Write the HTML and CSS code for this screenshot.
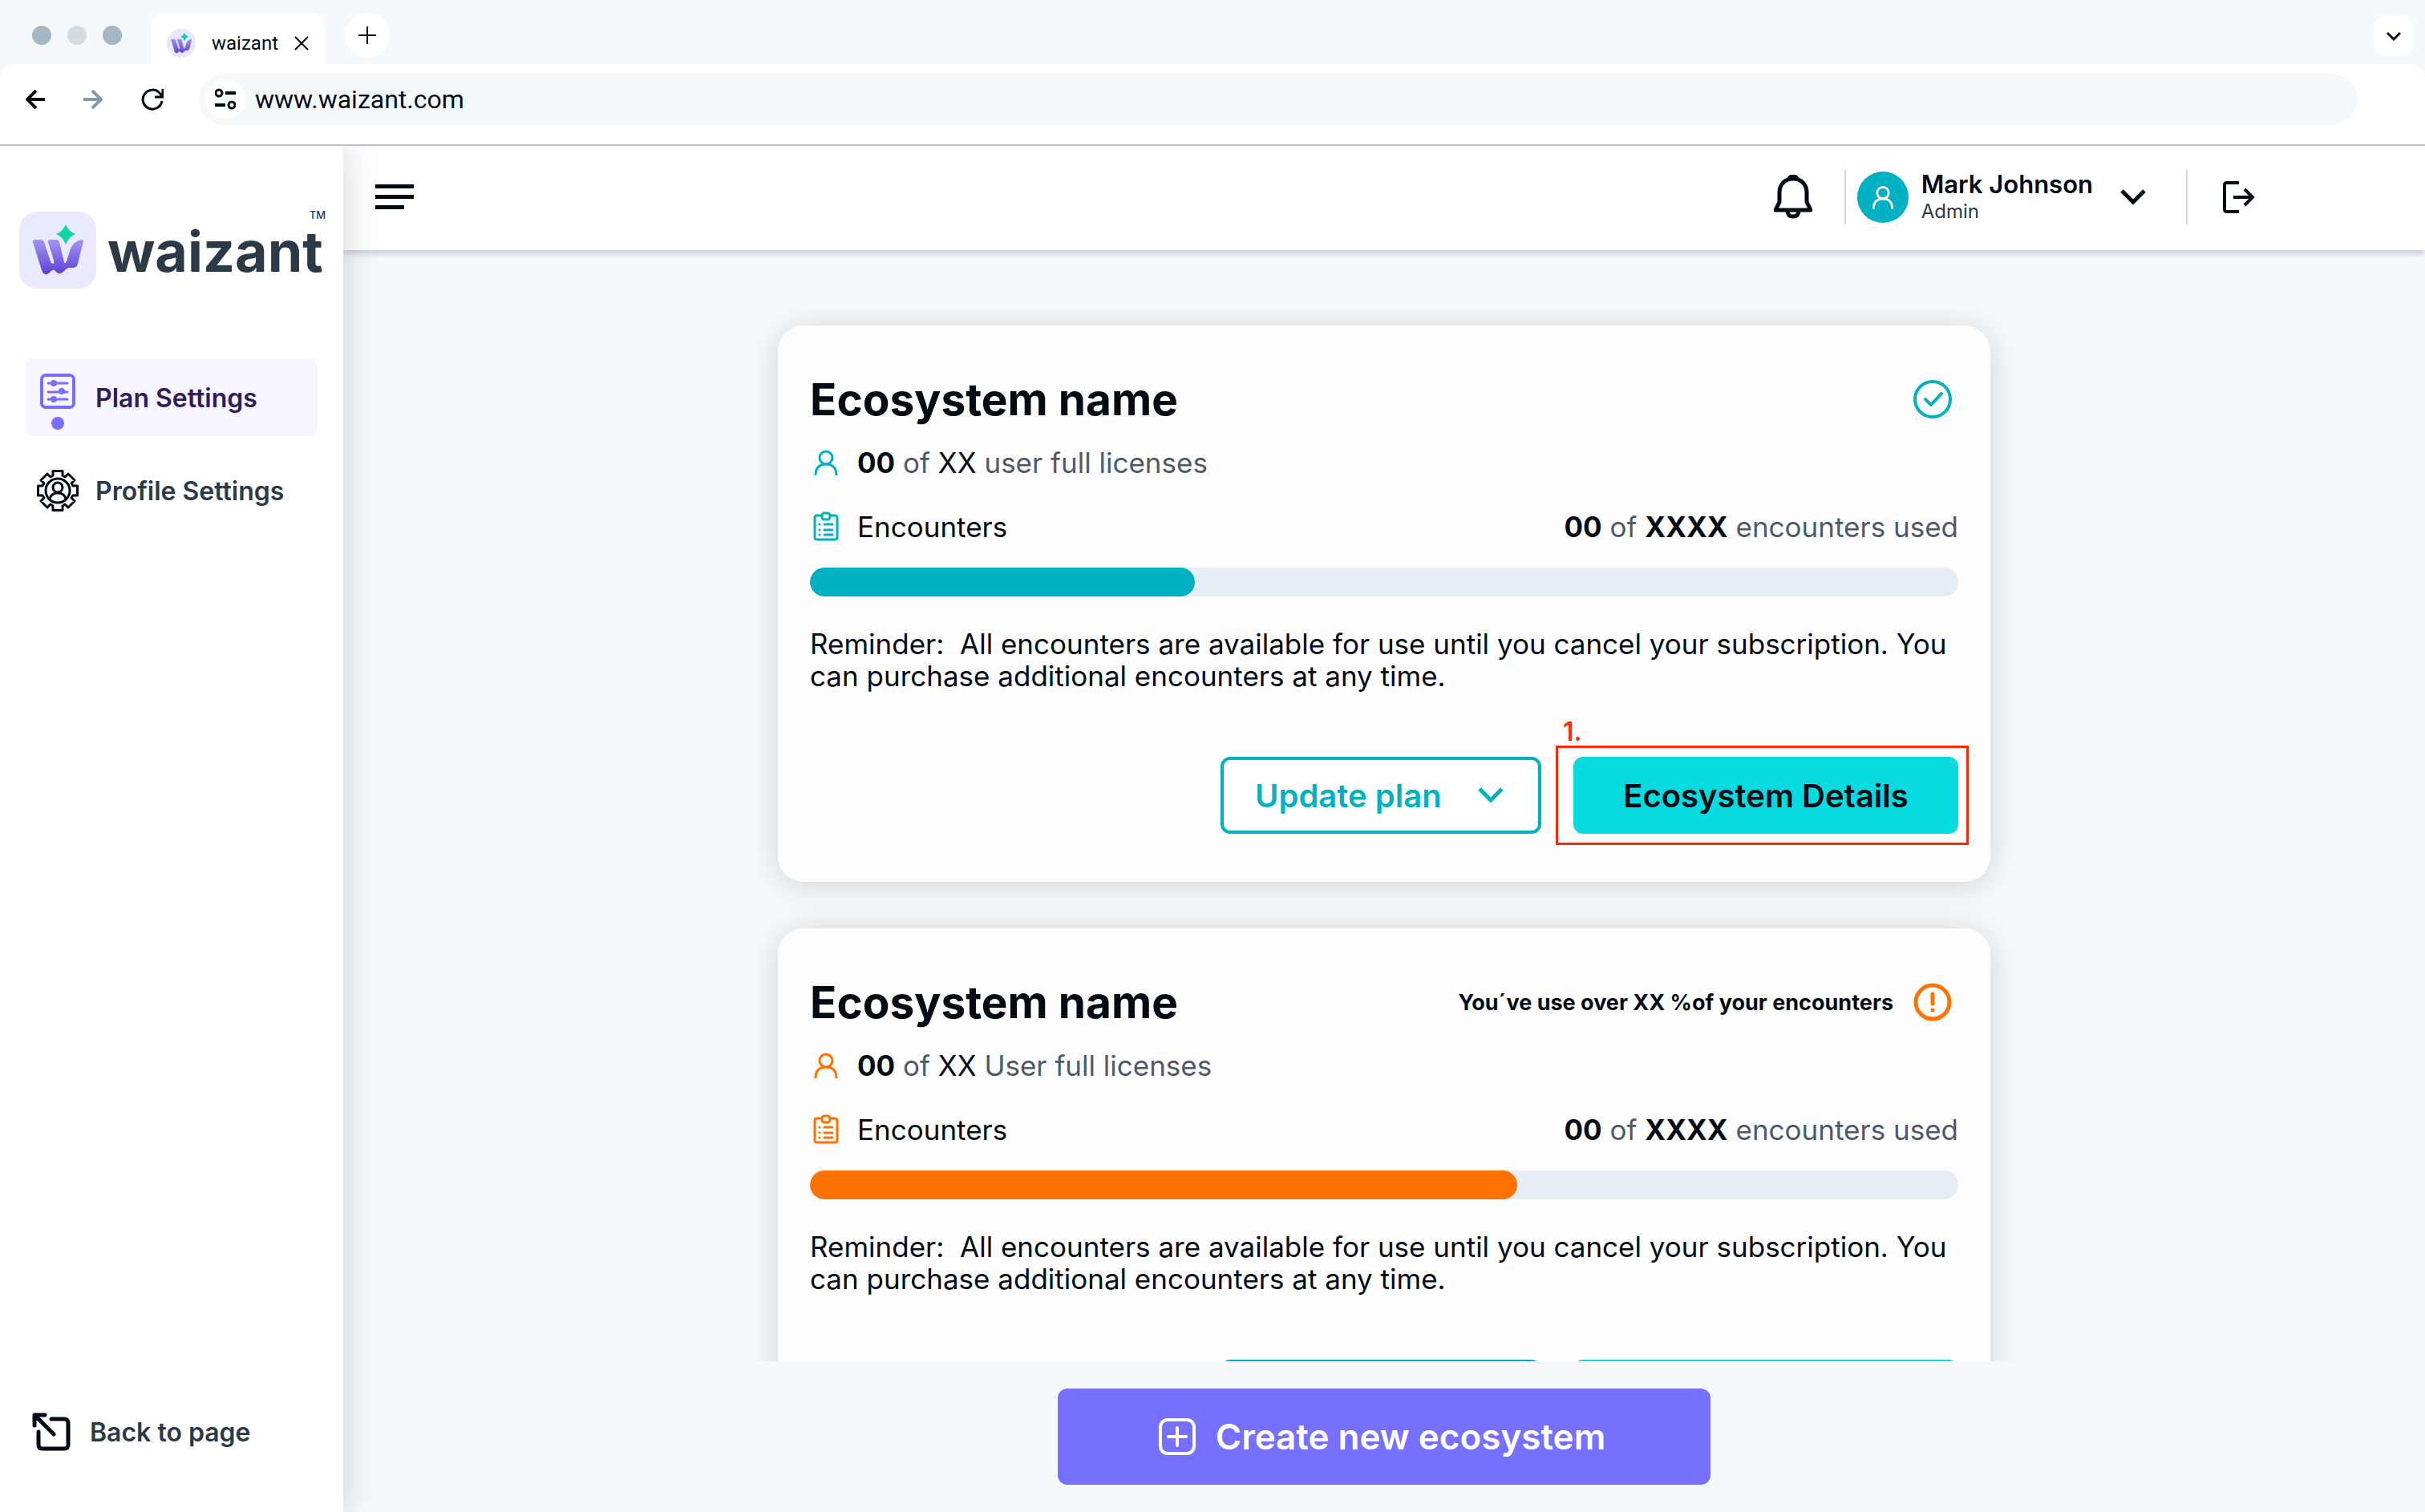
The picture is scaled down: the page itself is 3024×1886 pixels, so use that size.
FILE: index.html
```html
<!DOCTYPE html>
<html lang="en">
<head>
<meta charset="utf-8">
<meta name="viewport" content="width=device-width, initial-scale=1">
<title>waizant</title>
<link rel="stylesheet" href="styles.css">
</head>
<body>
<svg class="defs" width="0" height="0" aria-hidden="true">
  <defs>
    <linearGradient id="w-fill" x1="0" y1="0" x2="0" y2="1">
      <stop offset="0" stop-color="#a394f6"/>
      <stop offset="1" stop-color="#6040d4"/>
    </linearGradient>
    <symbol id="mark" viewBox="0 0 96 96">
      <path fill="url(#w-fill)" d="M19 35H27Q30 35 31 38L39 62Q40 65 42 65Q44 65 43 61L36 38Q35 35 38 35H46Q49 35 50 38L56 63Q57 66 59 62L63 49Q67 36 79 35Q80 35 80 37L73 65Q72 70 66 70H61Q58 72 55 75Q51 79 47 76L44 73Q42 72 40 74Q36 79 32 78Q29 77 28 73L17 38Q16 35 19 35Z"/>
      <path fill="#12d6ab" d="M58 16Q62 25 70 28Q62 31 58 41Q54 31 46 28Q54 25 58 16Z"/>
    </symbol>
    <symbol id="user" viewBox="0 0 40 40">
      <g fill="none" stroke="currentColor" stroke-width="3"><circle cx="20" cy="14" r="8"/><path d="M7 36C7 26 12 22 20 22S33 26 33 36"/></g>
    </symbol>
    <symbol id="clipboard" viewBox="0 0 40 40">
      <g fill="none" stroke="currentColor" stroke-width="3" stroke-linecap="round"><path d="M15 6H9Q6 6 6 9V33Q6 36 9 36H31Q34 36 34 33V9Q34 6 31 6H25"/><rect x="15" y="3" width="10" height="8" rx="3"/><path d="M12 17H12M18 17H28M12 24H12M18 24H28M12 30H12M18 30H28"/></g>
    </symbol>
    <symbol id="chevron" viewBox="0 0 32 20">
      <path d="M2 2L16 16L30 2" fill="none" stroke="currentColor" stroke-width="5"/>
    </symbol>
  </defs>
</svg>

<header class="browser">
  <div class="tabs">
    <div class="lights"><span></span><span></span><span></span></div>
    <div class="tab">
      <svg class="favicon" viewBox="4 4 88 88" aria-hidden="true"><use href="#mark" width="96" height="96"/></svg>
      <span>waizant</span>
      <button class="bare" aria-label="Close tab"><svg width="18" height="18" viewBox="0 0 18 18"><path d="M1 1L17 17M17 1L1 17" stroke="currentColor" stroke-width="2"/></svg></button>
    </div>
    <button class="new-tab" aria-label="New tab"><svg width="22" height="22" viewBox="0 0 22 22"><path d="M11 0V22M0 11H22" stroke="currentColor" stroke-width="2"/></svg></button>
    <button class="tab-list" aria-label="Search tabs"><svg width="18" height="12" viewBox="0 0 18 12"><path d="M1 2L9 10L17 2" fill="none" stroke="currentColor" stroke-width="3"/></svg></button>
  </div>
  <div class="toolbar">
    <button class="bare" aria-label="Back"><svg width="24" height="24" viewBox="0 0 24 24"><path d="M24 12H3M13 1L2 12L13 23" fill="none" stroke="currentColor" stroke-width="4"/></svg></button>
    <button class="bare faded" aria-label="Forward"><svg width="24" height="24" viewBox="0 0 24 24"><path d="M0 12H21M11 1L22 12L11 23" fill="none" stroke="currentColor" stroke-width="4"/></svg></button>
    <button class="bare" aria-label="Reload"><svg width="28" height="28" viewBox="0 0 28 28"><path d="M26 16A12 12 0 1 1 23 6L27 11M27 1V11H17" fill="none" stroke="currentColor" stroke-width="3"/></svg></button>
    <div class="address">
      <button class="site-info" aria-label="Site information"><svg width="26" height="30" viewBox="0 -2 26 30" fill="none" stroke="currentColor"><circle cx="5" cy="5" r="4" stroke-width="3"/><path d="M13 5H26M0 20H13" stroke-width="4"/><circle cx="21" cy="20" r="4" stroke-width="3"/></svg></button>
      <input type="text" aria-label="Address" value="www.waizant.com">
    </div>
  </div>
</header>

<div class="app">
  <aside class="sidebar">
    <div class="logo">
      <svg class="logo-mark" viewBox="0 0 96 96" aria-hidden="true"><use href="#mark"/></svg>
      <span class="logo-word">waizant</span>
      <span class="logo-tm">TM</span>
    </div>
    <nav>
      <a class="item current" href="#plan">
        <svg width="52" height="96" viewBox="0 0 52 96" fill="none" stroke="currentColor" stroke-width="4"><rect x="6" y="20" width="40" height="40" rx="5"/><path stroke-width="3" stroke-linecap="round" d="M14 30H38M14 41H38M14 50H38"/><g fill="currentColor" stroke="none"><circle cx="21" cy="30" r="4"/><circle cx="31" cy="40" r="4"/><circle cx="21" cy="50" r="4"/><circle cx="26" cy="80" r="8"/></g></svg>
        Plan Settings
      </a>
      <a class="item" href="#profile">
        <svg width="52" height="52" viewBox="-26 -26 52 52" fill="none" stroke="#020b13" stroke-width="3" stroke-linejoin="round"><path d="M-6-24.5H6V-19L9-17L13-21L21-13L17-9L19-6H24.5V6H19L17 9L21 13L13 21L9 17L6 19V24.5H-6V19L-9 17L-13 21L-21 13L-17 9L-19 6H-24.5V-6H-19L-17-9L-21-13L-13-21L-9-17L-6-19Z"/><circle r="15"/><circle cy="-4" r="6"/><path d="M-10 10Q-8 3 0 3T10 10"/></svg>
        Profile Settings
      </a>
    </nav>
    <a class="item back" href="#page">
      <svg width="48" height="48" viewBox="0 0 48 48" fill="none" stroke="#020b13" stroke-width="5" stroke-linecap="round" stroke-linejoin="round"><path d="M3 16V3H16M4 4L27 27M24 8H40Q45 8 45 13V40Q45 45 40 45H13Q8 45 8 40V24"/></svg>
      Back to page
    </a>
  </aside>

  <div class="main">
    <div class="topbar">
      <button class="bare" aria-label="Toggle menu"><svg width="48" height="32" viewBox="0 0 48 32" fill="currentColor"><path d="M0 0H48V5H0ZM0 13H48V18H0ZM0 26H36V31H0Z"/></svg></button>
      <div class="account">
        <button class="bare" aria-label="Notifications"><svg width="48" height="56" viewBox="0 0 48 56" fill="none" stroke="currentColor" stroke-width="5" stroke-linejoin="round"><path d="M24 5C13 5 7 13 7 22V34L2 44H46L41 34V22C41 13 35 5 24 5Z"/><path d="M19 5Q20 2 24 2T29 5M17 46Q18 52 24 52T31 46"/></svg></button>
        <span class="rule"></span>
        <button class="bare profile">
          <span class="avatar"><svg width="36" height="36" viewBox="0 0 40 40"><use href="#user" width="40" height="40"/></svg></span>
          <span class="who"><span class="name">Mark Johnson</span><span class="role">Admin</span></span>
          <svg width="32" height="20" aria-hidden="true"><use href="#chevron"/></svg>
        </button>
        <span class="rule"></span>
        <button class="bare logout" aria-label="Log out"><svg width="40" height="40" viewBox="0 0 40 40" fill="none" stroke="currentColor" stroke-width="4"><path d="M20 2H5Q2 2 2 5V35Q2 38 5 38H20M13 20H37M27 10L37 20L27 30"/></svg></button>
      </div>
    </div>

    <main class="list">
      <article class="card">
        <div class="card-head">
          <h2>Ecosystem name</h2>
          <div class="status"><svg width="48" height="48" viewBox="0 0 48 48" fill="none" stroke="currentColor" stroke-width="4" stroke-linecap="round" stroke-linejoin="round"><circle cx="24" cy="24" r="22"/><path d="M15 24L22 31L35 17"/></svg></div>
        </div>
        <p class="line licenses"><svg class="ico"><use href="#user"/></svg><span><b>00</b> of <i>XX</i> user full licenses</span></p>
        <p class="line encounters"><svg class="ico"><use href="#clipboard"/></svg><i>Encounters</i><span class="used"><b>00</b> of <b>XXXX</b> encounters used</span></p>
        <div class="bar" role="progressbar" aria-label="Encounters used" aria-valuenow="33"><span style="width:33.5%"></span></div>
        <p class="note">Reminder:&nbsp; All encounters are available for use until you cancel your subscription. You can purchase additional encounters at any time.</p>
        <div class="actions">
          <button class="outline">Update plan <svg width="32" height="20" aria-hidden="true"><use href="#chevron"/></svg></button>
          <div class="marked">
            <button class="solid">Ecosystem Details</button>
            <span class="marker"><span>1.</span></span>
          </div>
        </div>
      </article>

      <article class="card warn">
        <div class="card-head">
          <h2>Ecosystem name</h2>
          <div class="status"><strong>You´ve use over XX %of your encounters</strong><svg width="48" height="48" viewBox="0 0 48 48" fill="none" stroke="currentColor" stroke-width="5" stroke-linecap="round"><circle cx="24" cy="24" r="21"/><path d="M24 14V26M24 34V34"/></svg></div>
        </div>
        <p class="line licenses"><svg class="ico"><use href="#user"/></svg><span><b>00</b> of <i>XX</i> User full licenses</span></p>
        <p class="line encounters"><svg class="ico"><use href="#clipboard"/></svg><i>Encounters</i><span class="used"><b>00</b> of <b>XXXX</b> encounters used</span></p>
        <div class="bar" role="progressbar" aria-label="Encounters used" aria-valuenow="62"><span style="width:61.6%"></span></div>
        <p class="note">Reminder:&nbsp; All encounters are available for use until you cancel your subscription. You can purchase additional encounters at any time.</p>
        <div class="actions">
          <button class="outline">Update plan <svg width="32" height="20" aria-hidden="true"><use href="#chevron"/></svg></button>
          <button class="solid">Ecosystem Details</button>
        </div>
      </article>
    </main>

    <footer class="create">
      <button><svg width="48" height="48" viewBox="0 0 48 48" fill="none" stroke="currentColor" stroke-width="4" stroke-linecap="round"><rect x="3" y="3" width="42" height="42" rx="9"/><path d="M24 13V35M13 24H35"/></svg>Create new ecosystem</button>
    </footer>
  </div>
</div>
</body>
</html>
```
FILE: styles.css
```css
:root {
  --ink: #020b13;
  --slate: #2c3a47;
  --muted: #4d5b69;
  --page: #f5f9fc;
  --teal: #00b0c3;
  --orange: #ff7200;
  --violet: #7770ff;
}

* { box-sizing: border-box; }

body {
  margin: 0;
  height: 100vh;
  display: flex;
  flex-direction: column;
  font-family: Inter, sans-serif;
  color: var(--ink);
  background: var(--page);
}

button { font: inherit; color: inherit; border: 0; padding: 0; cursor: pointer; }
svg { display: block; flex: none; }
h2, p { margin: 0; }
a { color: inherit; text-decoration: none; }
i { font-style: normal; color: var(--ink); }
.defs { position: absolute; }
.bare { background: none; }

/* Browser frame */
.browser { flex: none; font-family: Roboto, sans-serif; }
.tabs { display: flex; align-items: flex-start; height: 80px; padding: 16px 14px 0 40px; }
.lights { display: flex; gap: 20px; margin: 16px 36px 0 0; }
.lights span { width: 24px; height: 24px; border-radius: 50%; background: #a4b7c5; }
.lights span:nth-child(2) { background: #d2dce2; }
.tab {
  display: flex;
  align-items: center;
  width: 217px;
  height: 64px;
  padding: 12px 20px 0;
  border-radius: 16px 16px 0 0;
  background: #fff;
  font-size: 24px;
}
.tab > span { margin: 0 auto; }
.favicon { width: 36px; height: 36px; border-radius: 50%; background: #e8e8ff; }
.new-tab {
  display: grid;
  place-items: center;
  width: 56px;
  height: 56px;
  margin-left: 25px;
  border-radius: 50%;
  background: #fff;
}
.tab-list {
  display: grid;
  place-items: center;
  width: 50px;
  height: 50px;
  margin: 4px 0 0 auto;
  border-radius: 16px;
  background: #fff;
}
.toolbar {
  display: flex;
  align-items: center;
  gap: 48px;
  padding: 12px 84px 24px 32px;
  border-bottom: 2px solid #b4c2d0;
  border-radius: 16px 16px 0 0;
  background: #fff;
}
.faded { color: #8599a8; }
.address {
  flex: 1;
  display: flex;
  align-items: center;
  gap: 12px;
  height: 64px;
  margin-left: -4px;
  padding: 0 8px;
  border-radius: 32px;
  background: var(--page);
}
.site-info { display: grid; place-items: center; width: 50px; height: 50px; border-radius: 50%; background: #fff; }
.address input { flex: 1; padding: 0; border: 0; outline: 0; background: none; font: 32px Roboto, sans-serif; color: var(--ink); }

/* Application shell */
.app { flex: 1; min-height: 0; display: flex; overflow: hidden; }
.sidebar {
  position: relative;
  z-index: 2;
  flex: none;
  display: flex;
  flex-direction: column;
  width: 428px;
  padding: 82px 32px 52px;
  background: #fff;
  box-shadow: 4px 0 40px rgba(2, 11, 19, .15);
}
.logo { position: relative; display: flex; align-items: center; gap: 14px; margin: 0 -8px 88px; color: var(--slate); }
.logo-mark { width: 96px; height: 96px; border-radius: 22px; background: #e9e9ff; }
.logo-word { padding-top: 4px; font-size: 70px; line-height: 64px; font-weight: 700; }
.logo-tm { position: absolute; top: -2px; right: -2px; font-size: 13px; line-height: 13px; font-weight: 500; }
nav { display: flex; flex-direction: column; gap: 20px; }
.item {
  display: flex;
  align-items: center;
  gap: 21px;
  height: 96px;
  padding-left: 14px;
  border-radius: 8px;
  color: var(--slate);
  font-size: 32px;
  font-weight: 600;
}
.current { background: #f7f5ff; color: #311b5e; }
.current svg { color: var(--violet); }
.back { gap: 24px; margin-top: auto; padding-left: 8px; }

.main { flex: 1; min-width: 0; display: flex; flex-direction: column; }
.topbar {
  position: relative;
  z-index: 1;
  flex: none;
  display: flex;
  align-items: center;
  justify-content: space-between;
  height: 130px;
  padding: 0 212px 2px 40px;
  background: #fff;
  box-shadow: 0 4px 8px rgba(2, 11, 19, .2);
}
.account { display: flex; align-items: center; }
.rule { width: 2px; height: 68px; background: #d0dae1; }
.account > .bare:first-child { margin-right: 40px; }
.profile { display: flex; align-items: center; margin: 0 50px 0 14px; text-align: left; }
.avatar { display: grid; place-items: center; width: 64px; height: 64px; margin-right: 16px; border-radius: 50%; background: var(--teal); color: #fff; }
.who { display: flex; flex-direction: column; margin-right: 34px; }
.name { font-size: 31px; line-height: 36px; font-weight: 600; }
.role { font-size: 24px; line-height: 32px; color: var(--slate); }
.logout { margin-left: 44px; }

/* Ecosystem cards */
.list {
  flex: 1;
  min-height: 0;
  display: flex;
  flex-direction: column;
  align-items: center;
  gap: 58px;
  padding: 94px 40px 0;
  overflow-y: auto;
  scrollbar-width: none;
}
.card {
  --accent: var(--teal);
  flex: none;
  width: 100%;
  max-width: 1512px;
  padding: 60px 40px;
  border-radius: 32px;
  background: #fdfdfe;
  box-shadow: 0 4px 40px rgba(2, 11, 19, .15);
}
.warn { --accent: var(--orange); }
.card-head { display: flex; align-items: center; justify-content: space-between; margin-bottom: 27px; }
.card-head h2 { font-size: 55px; line-height: 64px; font-weight: 700; }
.status { display: flex; align-items: center; gap: 25px; padding-right: 8px; color: var(--accent); }
.status strong { font-size: 27px; color: var(--ink); }
.line { display: flex; align-items: center; gap: 19px; font-size: 35px; line-height: 40px; color: var(--muted); }
.line b { color: var(--ink); font-weight: 700; }
.ico { width: 40px; height: 40px; color: var(--accent); }
.licenses { margin-bottom: 40px; }
.encounters { margin-bottom: 31px; }
.used { margin-left: auto; }
.bar { height: 36px; border-radius: 18px; background: #e6edf4; overflow: hidden; }
.bar span { display: block; height: 100%; border-radius: 18px; background: var(--accent); }
.note { margin: 39px 0 81px; font-size: 35px; line-height: 40px; }
.actions { display: flex; justify-content: flex-end; gap: 40px; font-size: 40px; font-weight: 600; }
.outline {
  display: flex;
  align-items: center;
  justify-content: space-between;
  width: 400px;
  height: 96px;
  padding: 0 43px 0 39px;
  border: 4px solid var(--teal);
  border-radius: 12px;
  background: #fff;
  color: var(--teal);
}
.solid { width: 480px; height: 96px; border-radius: 12px; background: #08dbdf; }
.marked { position: relative; }
.marker { position: absolute; inset: -14px -13px -14px -22px; border: 3px solid #ff2a05; pointer-events: none; }
.marker span { position: absolute; left: 6px; bottom: 100%; font-size: 32px; line-height: 40px; color: #ff2a05; }

.create { flex: none; display: flex; justify-content: center; padding: 34px 40px; }
.create button {
  display: flex;
  align-items: center;
  justify-content: center;
  gap: 24px;
  width: 100%;
  max-width: 814px;
  height: 120px;
  padding-right: 6px;
  border-radius: 12px;
  background: var(--violet);
  color: #fff;
  font-size: 44px;
  font-weight: 600;
}
```
